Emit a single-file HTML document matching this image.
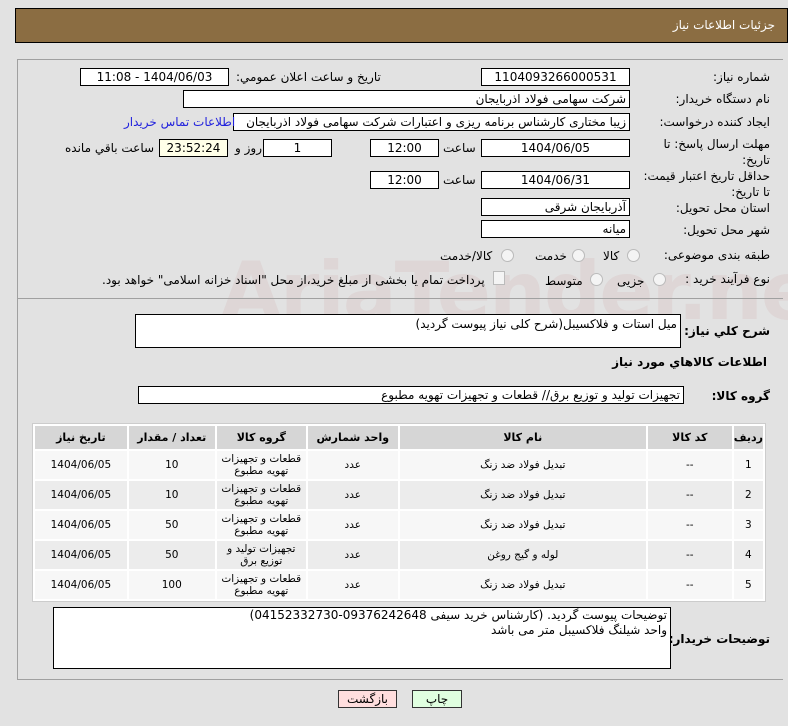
<!DOCTYPE html>
<html><head><meta charset="utf-8"><style>
body{margin:0;width:788px;height:726px;background:#e2e2e2;font-family:"DejaVu Sans","Liberation Sans",sans-serif;font-size:11px;color:#000;position:relative;overflow:hidden}
.a{position:absolute;white-space:nowrap}
.hdr{left:15px;top:8px;width:773px;height:35px;background:#8b6d42;border:1px solid #000;box-sizing:border-box}
.hdr span{position:absolute;right:12px;top:9px;color:#fff;font-size:12px}
.panel{left:17px;top:59px;width:766px;height:621px;border:1px solid #a0a0a0;border-right:none;box-sizing:border-box}
.box{position:absolute;background:#fff;border:1px solid #000;box-sizing:border-box;height:18px;line-height:16px;font-size:12px;direction:rtl;padding:0 3px;white-space:nowrap;overflow:hidden}
.c{text-align:center}
.lbl{position:absolute;direction:rtl;white-space:nowrap;font-size:12px}
.radio{position:absolute;width:11px;height:11px;border:1px solid #bbb;border-radius:50%;background:#f4f4f4}
table{position:absolute;left:32px;top:423px;width:734px;border-collapse:separate;border-spacing:2px;background:#fff;border:1px solid #ccc;direction:rtl}
th{background:#d6d6d6;height:23px;padding:0;font-size:11px}
td{text-align:center;height:28px;padding:0;font-size:10.5px;line-height:12px}
tr.o td{background:#f7f7f7} tr.e td{background:#ececec}
.btn{position:absolute;height:18px;border:1px solid #333;box-sizing:border-box;text-align:center;line-height:16px;font-size:12px}
</style></head><body>
<div class="a hdr"><span>جزئیات اطلاعات نیاز</span></div>
<div class="a panel"></div>
<div class="a" style="left:220px;top:245px;font-size:80px;color:rgba(200,130,130,0.12);font-weight:bold;letter-spacing:-2px">AriaTender.neT</div>

<div class="lbl" style="right:18px;top:70px">شماره نیاز:</div>
<div class="box c" style="left:481px;top:68px;width:149px">1104093266000531</div>
<div class="lbl" style="left:236px;top:70px">تاریخ و ساعت اعلان عمومي:</div>
<div class="box c" style="left:80px;top:68px;width:149px">1404/06/03 - 11:08</div>

<div class="lbl" style="right:18px;top:92px">نام دستگاه خریدار:</div>
<div class="box" style="left:183px;top:90px;width:447px">شرکت سهامی فولاد اذربایجان</div>

<div class="lbl" style="right:18px;top:115px">ایجاد کننده درخواست:</div>
<div class="box" style="left:233px;top:113px;width:397px">زیبا مختاری کارشناس برنامه ریزی و اعتبارات شرکت سهامی فولاد اذربایجان</div>
<div class="lbl" style="left:124px;top:115px;color:#2222dd">اطلاعات تماس خریدار</div>

<div class="lbl" style="right:18px;top:136px;line-height:16px">مهلت ارسال پاسخ: تا<br>تاریخ:</div>
<div class="box c" style="left:481px;top:139px;width:149px">1404/06/05</div>
<div class="lbl" style="left:443px;top:141px">ساعت</div>
<div class="box c" style="left:370px;top:139px;width:69px">12:00</div>
<div class="box c" style="left:263px;top:139px;width:69px">1</div>
<div class="lbl" style="left:235px;top:141px">روز و</div>
<div class="box c" style="left:159px;top:139px;width:69px;background:#ffffe8">23:52:24</div>
<div class="lbl" style="left:65px;top:141px">ساعت باقي مانده</div>

<div class="lbl" style="right:18px;top:168px;line-height:16px">حداقل تاریخ اعتبار قیمت:<br>تا تاریخ:</div>
<div class="box c" style="left:481px;top:171px;width:149px">1404/06/31</div>
<div class="lbl" style="left:443px;top:173px">ساعت</div>
<div class="box c" style="left:370px;top:171px;width:69px">12:00</div>

<div class="lbl" style="right:18px;top:201px">استان محل تحویل:</div>
<div class="box" style="left:481px;top:198px;width:149px">آذربایجان شرقی</div>
<div class="lbl" style="right:18px;top:223px">شهر محل تحویل:</div>
<div class="box" style="left:481px;top:220px;width:149px">میانه</div>

<div class="lbl" style="right:18px;top:248px">طبقه بندی موضوعی:</div>
<div class="radio" style="left:627px;top:249px"></div><div class="lbl" style="left:603px;top:249px">کالا</div>
<div class="radio" style="left:572px;top:249px"></div><div class="lbl" style="left:535px;top:249px">خدمت</div>
<div class="radio" style="left:501px;top:249px"></div><div class="lbl" style="left:440px;top:249px">کالا/خدمت</div>

<div class="lbl" style="right:18px;top:272px">نوع فرآیند خرید :</div>
<div class="radio" style="left:653px;top:273px"></div><div class="lbl" style="left:617px;top:274px">جزیی</div>
<div class="radio" style="left:590px;top:273px"></div><div class="lbl" style="left:545px;top:274px">متوسط</div>
<div class="a" style="left:493px;top:271px;width:10px;height:12px;border:1px solid #bbb;background:#f4f4f4"></div>
<div class="lbl" style="left:102px;top:273px">پرداخت تمام یا بخشی از مبلغ خرید،از محل "اسناد خزانه اسلامی" خواهد بود.</div>
<div class="a" style="left:17px;top:298px;width:766px;border-top:1px solid #a0a0a0"></div>

<div class="lbl" style="right:18px;top:324px;font-weight:bold">شرح کلي نیاز:</div>
<div class="box" style="left:135px;top:314px;width:546px;height:34px;line-height:18px">میل استات و فلاکسیبل(شرح کلی نیاز پیوست گردید)</div>
<div class="lbl" style="right:21px;top:355px;font-weight:bold">اطلاعات کالاهاي مورد نیاز</div>
<div class="lbl" style="right:18px;top:389px;font-weight:bold">گروه کالا:</div>
<div class="box" style="left:138px;top:386px;width:546px">تجهیزات تولید و توزیع برق//  قطعات و تجهیزات تهویه مطبوع</div>

<table>
<tr><th style="width:26px">ردیف</th><th style="width:84px">کد کالا</th><th style="width:246px">نام کالا</th><th style="width:90px">واحد شمارش</th><th style="width:89px">گروه کالا</th><th style="width:86px">تعداد / مقدار</th><th>تاریخ نیاز</th></tr>
<tr class="o"><td>1</td><td>--</td><td>تبدیل فولاد ضد زنگ</td><td>عدد</td><td>قطعات و تجهیزات<br>تهویه مطبوع</td><td>10</td><td>1404/06/05</td></tr>
<tr class="e"><td>2</td><td>--</td><td>تبدیل فولاد ضد زنگ</td><td>عدد</td><td>قطعات و تجهیزات<br>تهویه مطبوع</td><td>10</td><td>1404/06/05</td></tr>
<tr class="o"><td>3</td><td>--</td><td>تبدیل فولاد ضد زنگ</td><td>عدد</td><td>قطعات و تجهیزات<br>تهویه مطبوع</td><td>50</td><td>1404/06/05</td></tr>
<tr class="e"><td>4</td><td>--</td><td>لوله و گیج روغن</td><td>عدد</td><td>تجهیزات تولید و<br>توزیع برق</td><td>50</td><td>1404/06/05</td></tr>
<tr class="o"><td>5</td><td>--</td><td>تبدیل فولاد ضد زنگ</td><td>عدد</td><td>قطعات و تجهیزات<br>تهویه مطبوع</td><td>100</td><td>1404/06/05</td></tr>
</table>

<div class="lbl" style="right:18px;top:632px;font-weight:bold">توضیحات خریدار:</div>
<div class="box" style="left:53px;top:607px;width:618px;height:62px;line-height:15px;white-space:normal">توضیحات پیوست گردید. (کارشناس خرید سیفی 09376242648-04152332730)<br>واحد شیلنگ فلاکسیبل متر می باشد</div>

<div class="btn" style="left:338px;top:690px;width:59px;background:#ffdede">بازگشت</div>
<div class="btn" style="left:412px;top:690px;width:50px;background:#e0ffe0">چاپ</div>
</body></html>
